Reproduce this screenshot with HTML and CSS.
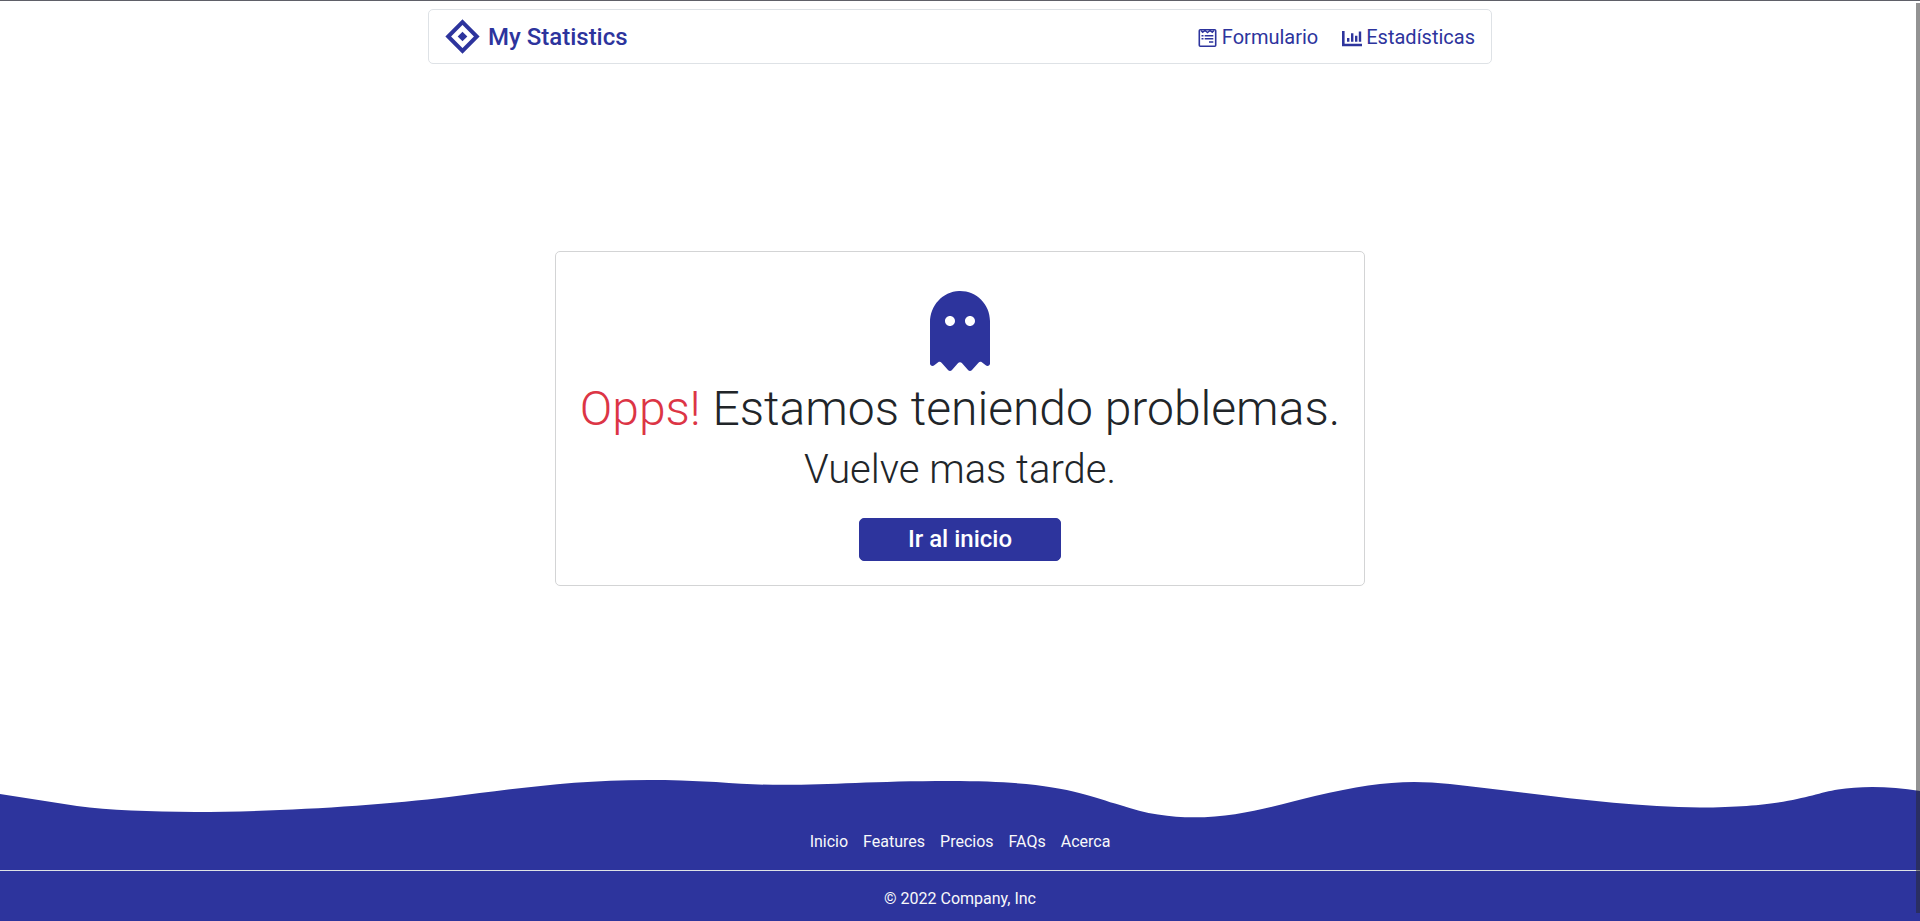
FILE: index.html
```html
<!DOCTYPE html>
<html lang="es">
<head>
<meta charset="utf-8">
<meta name="viewport" content="width=device-width, initial-scale=1">
<title>My Statistics</title>
<link rel="stylesheet" href="styles.css">
</head>
<body class="page">
<header class="navbar">
  <a class="brand" href="#">
    <svg class="brand-icon" viewBox="0 0 36 36" aria-hidden="true"><path fill="none" stroke="currentColor" stroke-width="4" d="M17.500 3.200 31.800 17.500 17.500 31.800 3.200 17.500Z"/><path fill="currentColor" d="m17.500 12.700 4.800 4.800-4.800 4.800-4.800-4.800z"/></svg>
    <span>My Statistics</span>
  </a>
  <nav class="nav-links">
    <a class="nav-link" href="#">
      <svg class="nav-icon" viewBox="0 0 20 21" aria-hidden="true"><rect x="1.300" y="2.800" width="16.400" height="16.400" rx="1" fill="none" stroke="currentColor" stroke-width="1.600"/><path fill="none" stroke="currentColor" stroke-width="1.400" d="m3 3.500 1.700 1.800L7 3.500l2.500 2 2.500-2 2.300 1.800L16 3.500"/><path fill="currentColor" d="M3.500 8h2v1.500h-2zM6.700 8h8.600v1.500H6.700zM3.500 11h2v1.500h-2zM6.700 11h8.600v1.500H6.700zM11 14.200h4.300v1.600H11z"/></svg>
      <span>Formulario</span>
    </a>
    <a class="nav-link" href="#">
      <svg class="nav-icon" viewBox="0 0 20 21" aria-hidden="true"><path fill="currentColor" d="M0 4h2.600v12.800H20v2.500H0zM5 11h2.400v3.700H5zM9 6.300h2.400v8.400H9zM13 8.700h2.400v6H13zM16.800 4.600h2.400v10.100h-2.400z"/></svg>
      <span>Estadísticas</span>
    </a>
  </nav>
</header>
<main class="content">
  <section class="card">
    <svg class="ghost" viewBox="0 0 384 512" aria-hidden="true"><path fill="currentColor" d="M186.1.09C81.01 3.240 0 94.920 0 200.050v263.920c0 14.260 17.230 21.390 27.310 11.310l24.920-18.530c6.660-4.950 16-3.990 21.510 2.210l42.950 48.350c6.250 6.250 16.380 6.250 22.630 0l40.720-45.850c6.370-7.170 17.560-7.170 23.920 0l40.720 45.850c6.250 6.250 16.380 6.250 22.630 0l42.950-48.350c5.510-6.200 14.850-7.170 21.510-2.210l24.920 18.530c10.080 10.080 27.310 2.940 27.310-11.310V192C384 84 294.830-3.170 186.100.09zM128 224c-17.670 0-32-14.330-32-32s14.330-32 32-32 32 14.330 32 32-14.330 32-32 32zm128 0c-17.670 0-32-14.330-32-32s14.330-32 32-32 32 14.330 32 32-14.330 32-32 32z"/></svg>
    <h1 class="title"><span class="alert">Opps!</span> Estamos teniendo problemas.</h1>
    <p class="subtitle">Vuelve mas tarde.</p>
    <a class="button" href="#">Ir al inicio</a>
  </section>
</main>
<footer class="footer">
  <svg class="wave" viewBox="0 -7 1920 47" preserveAspectRatio="none" aria-hidden="true"><path fill="currentColor" d="M0 14 77 26C170 38 340 30 449 17C530 7 600-5 716 2C800 9 840 1 950 1C1060 1 1085 15 1120 25C1200 53 1270 26 1315 16C1370 3 1405-1 1450 4C1540 14 1620 27 1700 27.500C1790 27 1810 14 1838 9.500C1860 6 1890 6 1920 11V41H0Z"/></svg>
  <div class="footer-body">
    <ul class="footer-links">
      <li><a href="#">Inicio</a></li>
      <li><a href="#">Features</a></li>
      <li><a href="#">Precios</a></li>
      <li><a href="#">FAQs</a></li>
      <li><a href="#">Acerca</a></li>
    </ul>
    <p class="copyright">© 2022 Company, Inc</p>
  </div>
</footer>
<div class="scrollbar" aria-hidden="true"></div>
</body>
</html>
```
FILE: styles.css
```css
*,
*::before,
*::after {
  box-sizing: border-box;
}

.page {
  margin: 0;
  min-height: 100vh;
  display: flex;
  flex-direction: column;
  border-top: 1px solid #5f6068;
  background: #fff;
  color: #212529;
  font-family: Roboto, "Liberation Sans", sans-serif;
  font-size: 16px;
  line-height: 24px;
}

.page a {
  text-decoration: none;
}

.navbar {
  width: calc(100% - 32px);
  max-width: 1064px;
  margin: 8px auto 0;
  padding: 8px 16px 7px;
  display: flex;
  align-items: center;
  justify-content: space-between;
  border: 1px solid #dee2e6;
  border-radius: 5px;
}

.brand {
  display: flex;
  align-items: center;
  gap: 7px;
  color: #2d349d;
  font-size: 24px;
  font-weight: 500;
  line-height: 38px;
}

.brand-icon {
  width: 36px;
  height: 36px;
}

.nav-links {
  display: flex;
  gap: 24px;
}

.nav-link {
  display: flex;
  align-items: center;
  gap: 4px;
  color: #2d349d;
  font-size: 20px;
  line-height: 31px;
}

.nav-icon {
  width: 20px;
  height: 21px;
}

.content {
  flex: 1;
  display: flex;
  align-items: center;
  justify-content: center;
}

.card {
  display: flex;
  flex-direction: column;
  align-items: center;
  padding: 39px 24px 24px;
  border: 1px solid #d3d4d5;
  border-radius: 5px;
  text-align: center;
}

.ghost {
  width: 60px;
  height: 80px;
  color: #2d349d;
}

.title {
  margin: 9px 0 8px;
  font-size: 48px;
  font-weight: 300;
  line-height: 58px;
}

.alert {
  color: #dc3545;
}

.subtitle {
  margin: 0 0 24px;
  font-size: 40px;
  font-weight: 300;
  line-height: 48px;
}

.button {
  padding: 5px 48px;
  border: 1px solid #2d349d;
  border-radius: 5px;
  background: #2d349d;
  color: #fff;
  font-size: 24px;
  font-weight: 500;
  line-height: 31px;
}

.footer {
  color: #2d349d;
}

.wave {
  display: block;
  width: 100%;
  height: 47px;
}

.footer-body {
  padding: 10px 0;
  background: #2d349d;
  text-align: center;
}

.footer-links {
  margin: 0;
  padding: 0 0 16px;
  display: flex;
  justify-content: center;
  gap: 15px;
  border-bottom: 1px solid #dee2e6;
  list-style: none;
}

.footer-links a,
.copyright {
  color: #f8f9fa;
}

.copyright {
  margin: 16px 0 0;
}

.scrollbar {
  position: fixed;
  top: 3px;
  right: 0;
  bottom: 8px;
  width: 4px;
  background: rgba(39, 39, 39, 0.5);
}
```
